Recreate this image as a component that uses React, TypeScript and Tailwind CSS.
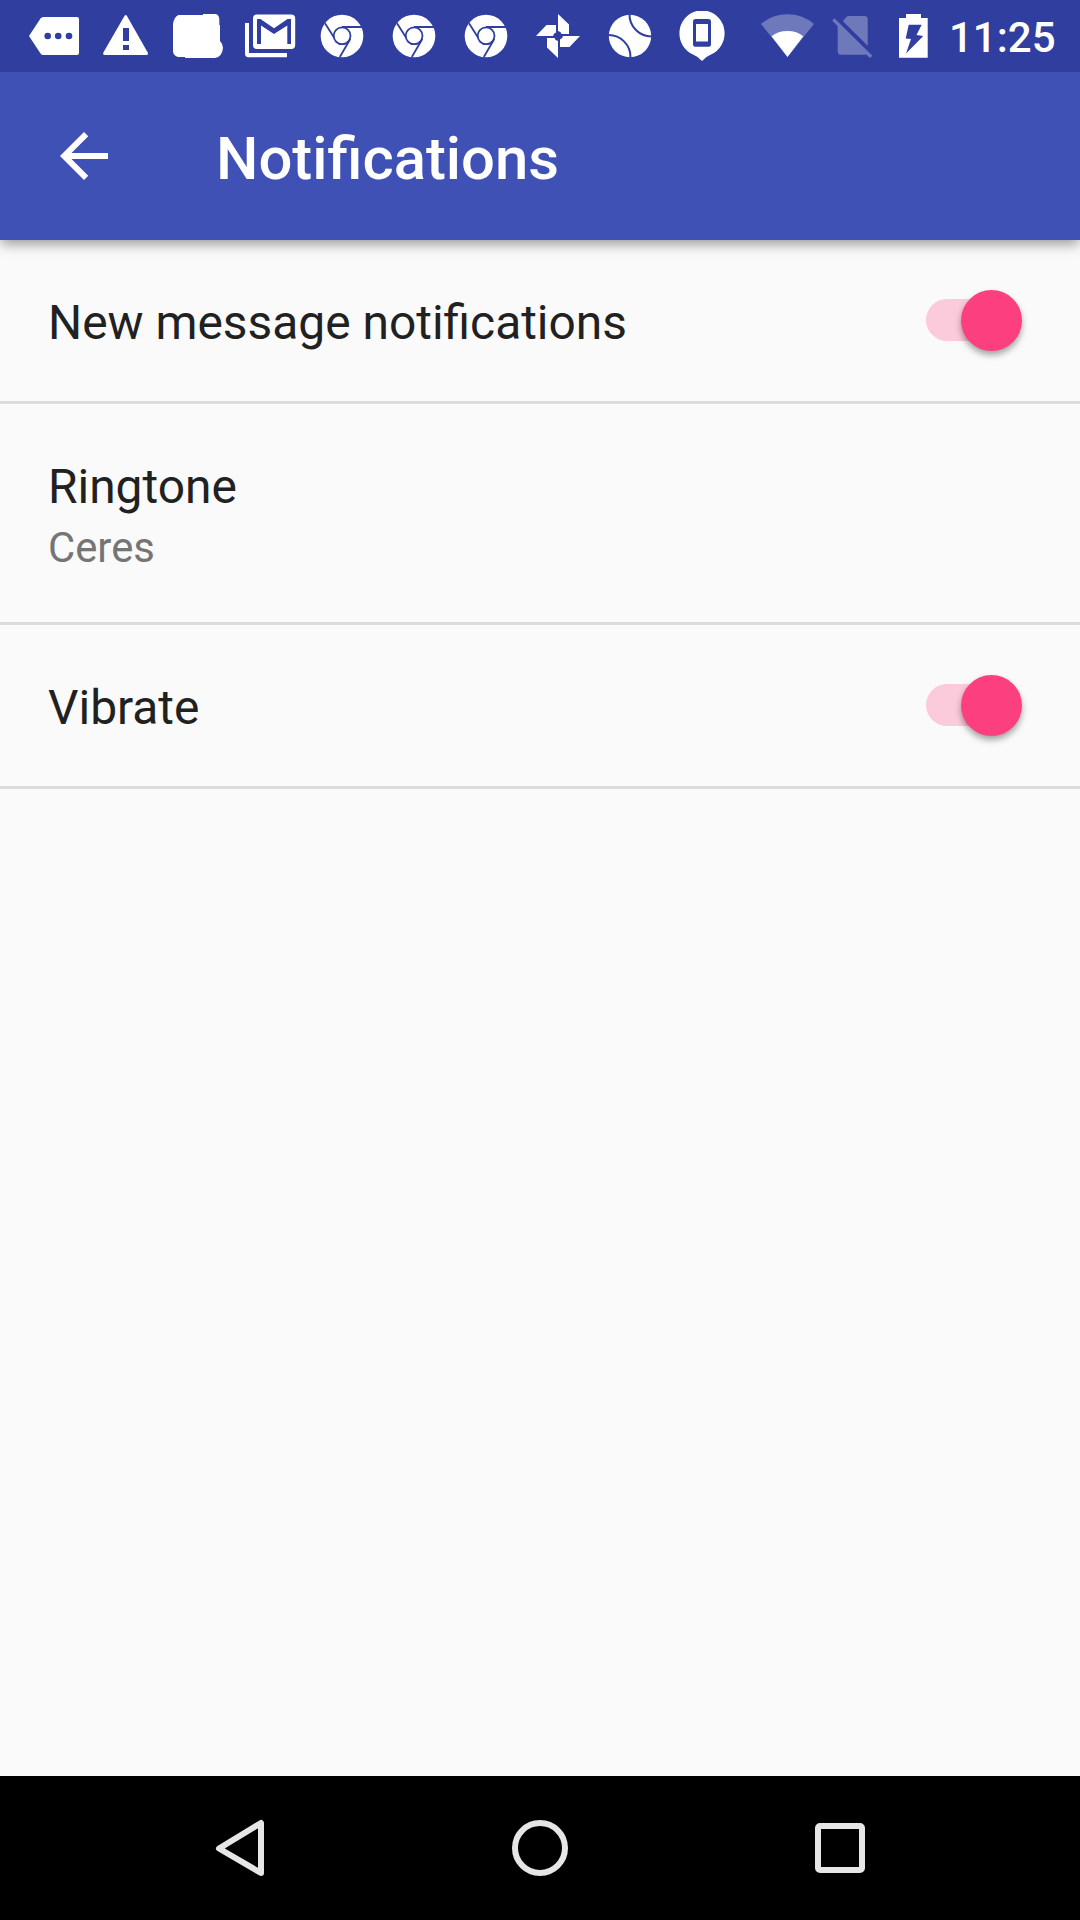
import type { ReactNode } from "react";

function StatusIcon({ children }: { children: ReactNode }) {
  return (
    <svg viewBox="0 0 72 72" className="size-[72px] shrink-0 text-white" fill="currentColor">
      {children}
    </svg>
  );
}

const BAR = "#303F9F";

function ChromeIcon() {
  return (
    <StatusIcon>
      <circle cx="36" cy="36" r="21.3" />
      <g fill="none" stroke={BAR} strokeWidth="1.8">
        <circle cx="36.1" cy="35.8" r="8.4" />
        <path d="M36 27H56M19 23.3L28 37.5M44.3 39L33.8 57" />
      </g>
    </StatusIcon>
  );
}

function StatusBar() {
  return (
    <header className="relative z-20 flex h-[72px] items-center bg-[#303F9F] pl-[18px]">
      <StatusIcon>
        <path d="M11 36L22.5 18.5Q23.5 17 25.5 17H59q2 0 2 2V53q0 2-2 2H25.5q-2 0-3-1.5Z" />
        <g fill={BAR}>
          <circle cx="29.7" cy="36" r="3.3" />
          <circle cx="40.2" cy="36" r="3.3" />
          <circle cx="51" cy="36" r="3.3" />
        </g>
      </StatusIcon>
      <StatusIcon>
        <path d="M34.3 16.2Q35.7 14 37.1 16.2L57.7 52.5Q58.5 55 56.5 55H14.800Q12.5 55 13.4 52.5Z" />
        <path fill={BAR} d="M33 28h6v13h-6zM33 45h6v5h-6z" />
      </StatusIcon>
      <StatusIcon>
        <path d="M16.5 15H41V14H54Q57 15 57.3 19V25H58V41Q61 44 61 48Q60 57 53 58H23V57H16Q12 56 11 52V24Q12 17 16.5 15Z" />
      </StatusIcon>
      <StatusIcon>
        <rect x="19" y="14.5" width="42.2" height="34.5" rx="4" />
        <path d="M11 23h4v30h38v4.3H14.5Q11 57.3 11 53.5Z" />
        <path fill={BAR} d="M23 44V19h3.5L40 28.3L53.5 19H57V44H53.3V25.5L40 34L27 25.5V44Z" />
      </StatusIcon>
      <ChromeIcon />
      <ChromeIcon />
      <ChromeIcon />
      <StatusIcon>
        {[0, 90, 180, 270].map((turn) => (
          <path
            key={turn}
            transform={`rotate(${turn} 36 36)`}
            d="M36 14L47 24.5V34H39.5Q39 31.5 36 31Z"
          />
        ))}
      </StatusIcon>
      <StatusIcon>
        <circle cx="36" cy="36" r="21.2" />
        <g fill="none" stroke={BAR} strokeWidth="2">
          <path d="M35.5 14A22 22 0 0 0 58 36.5M14 35A22 22 0 0 1 36.5 58" />
        </g>
      </StatusIcon>
      <StatusIcon>
        <path d="M30.5 11H41.5A23.2 23.2 0 0 1 45 54.5Q40 56.5 36 61Q32 56.5 27 54.5A23.2 23.2 0 0 1 30.5 11Z" />
        <rect x="27" y="19" width="18" height="27.7" rx="2.5" fill={BAR} />
        <path d="M30 24h12v17.5h-12z" />
      </StatusIcon>

      <svg viewBox="740 0 200 72" className="ml-[2px] h-[72px] w-[200px] shrink-0" fill="white">
        <path fillOpacity="0.3" d="M761 24Q772 14.3 787.5 14.3T814 24L787.5 57Z" />
        <path d="M771.5 36.3Q778 31 787.5 31T803.3 36.3L787.5 57Z" />
        <path
          fillOpacity="0.3"
          d="M837.7 25.9L832.3 20.7L834.3 18.3L872.3 55.7L870 58L866 54.2Q865 54.7 864 54.7H841Q837.7 54.7 837.7 51.5ZM847.5 16H864.500Q867.700 16 867.700 19V45.700L843.300 21.500V20.300Z"
        />
        <path
          fillRule="evenodd"
          d="M906 14h15v4h6.7v39.8h-28.7V18h7ZM908.7 24.7L905.7 38.5L911 39L906 53.5L923.3 36L916.5 35L921.7 24.7Z"
        />
      </svg>
      <time className="ml-[9px] pt-[3px] text-[42px] leading-[72px] font-medium text-white">11:25</time>
    </header>
  );
}

function Toolbar() {
  return (
    <div className="z-10 flex h-[168px] items-center bg-[#3F51B5] pl-12 shadow-[0_5px_12px_-1px_rgba(0,0,0,0.4)]">
      <svg viewBox="0 0 24 24" className="size-[72px]" fill="white">
        <path d="M20 11H7.83l5.59-5.59L12 4l-8 8 8 8 1.41-1.41L7.83 13H20v-2z" />
      </svg>
      <h1 className="ml-24 pt-[5px] text-[59.8px] leading-[70px] font-medium text-white">Notifications</h1>
    </div>
  );
}

function Toggle() {
  return (
    <div role="switch" aria-checked="true" className="mb-px flex h-[60px] w-24 items-center">
      <div className="h-[42px] w-[66px] shrink-0 rounded-l-full bg-[#FBCADB]" />
      <div className="-ml-[31px] size-[61px] shrink-0 rounded-full bg-[#FC407F] shadow-[0_4px_6px_rgba(0,0,0,0.35)]" />
    </div>
  );
}

function Row({ title, summary, on }: { title: string; summary?: string; on?: boolean }) {
  return (
    <section className="flex items-center justify-between border-b-3 border-[#DCDCDC] pr-[58px] pl-12">
      <div className={summary ? "pt-[55px] pb-[47px]" : "pt-[55px] pb-[50px]"}>
        <h2 className="text-[47.9px] leading-[56px] text-[#212121]">{title}</h2>
        {summary && <p className="mt-1.5 text-[41.8px] leading-[54px] text-[#757575]">{summary}</p>}
      </div>
      {on && <Toggle />}
    </section>
  );
}

function NavBar() {
  return (
    <nav className="flex h-36 items-center justify-between bg-black px-[204px] text-[#E6E6E6]">
      <svg viewBox="0 0 72 72" className="size-[72px]" fill="none" stroke="currentColor" strokeWidth="6" strokeLinejoin="round">
        <path d="M57 11V61L15 36.5Z" />
      </svg>
      <svg viewBox="0 0 72 72" className="size-[72px]" fill="none" stroke="currentColor" strokeWidth="6">
        <circle cx="36" cy="36" r="25" />
      </svg>
      <svg viewBox="0 0 72 72" className="size-[72px]" fill="none" stroke="currentColor" strokeWidth="6">
        <rect x="14" y="14" width="44" height="44" rx="2" />
      </svg>
    </nav>
  );
}

export default function App() {
  return (
    <div className="flex h-[1920px] w-[1080px] flex-col bg-[#FAFAFA] font-[Roboto,sans-serif]">
      <StatusBar />
      <Toolbar />
      <main className="grow">
        <Row title="New message notifications" on />
        <Row title="Ringtone" summary="Ceres" />
        <Row title="Vibrate" on />
      </main>
      <NavBar />
    </div>
  );
}
